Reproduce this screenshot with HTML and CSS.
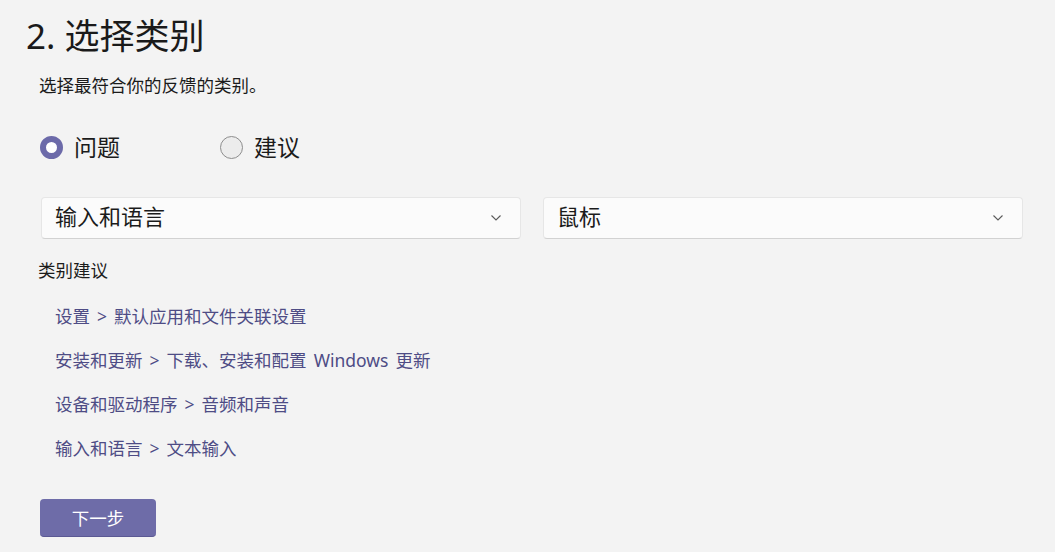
FILE: index.html
```html
<!DOCTYPE html>
<html lang="zh-CN">
<head>
<meta charset="utf-8">
<link rel="stylesheet" href="styles.css">
</head>
<body>
<div class="page">
  <h1 class="title">2. 选择类别</h1>
  <p class="subtitle">选择最符合你的反馈的类别。</p>
  <div class="radios">
    <div class="radio-item"><span class="radio checked"></span><span class="radio-label">问题</span></div>
    <div class="radio-item"><span class="radio"></span><span class="radio-label">建议</span></div>
  </div>
  <div class="selects">
    <div class="select"><span class="select-text">输入和语言</span><svg class="chev" width="12" height="8" viewBox="0 0 12 8"><path d="M1.5 1.5 L6 6 L10.5 1.5" fill="none" stroke="#5a5a5a" stroke-width="1.1"/></svg></div>
    <div class="select"><span class="select-text">鼠标</span><svg class="chev" width="12" height="8" viewBox="0 0 12 8"><path d="M1.5 1.5 L6 6 L10.5 1.5" fill="none" stroke="#5a5a5a" stroke-width="1.1"/></svg></div>
  </div>
  <div class="section-label">类别建议</div>
  <ul class="links">
    <li>设置 &gt; 默认应用和文件关联设置</li>
    <li>安装和更新 &gt; 下载、安装和配置 Windows 更新</li>
    <li>设备和驱动程序 &gt; 音频和声音</li>
    <li>输入和语言 &gt; 文本输入</li>
  </ul>
  <button class="next">下一步</button>
</div>
</body>
</html>
```
FILE: styles.css
```css
html, body {
  margin: 0;
  padding: 0;
  background: #f3f3f3;
}
body {
  font-family: "Noto Sans", "Noto Sans CJK SC", sans-serif;
  color: #1b1b1b;
  width: 1055px;
  height: 552px;
  overflow: hidden;
}
.page {
  padding: 16px 0 0 40px;
  display: flex;
  flex-direction: column;
  align-items: flex-start;
}
.title {
  margin: 0 0 0 -14px;
  font-size: 35px;
  font-weight: 400;
  line-height: 40px;
  color: #1a1a1a;
}
.subtitle {
  margin: 17px 0 0 -1px;
  font-size: 17.5px;
  line-height: 24px;
}
.radios {
  margin-top: 37px;
  display: grid;
  grid-template-columns: 180px 180px;
  height: 26px;
}
.radio-item {
  display: flex;
  align-items: center;
  gap: 11px;
}
.radio {
  width: 23px;
  height: 23px;
  border-radius: 50%;
  box-sizing: border-box;
  border: 1px solid #8d8d8d;
  background: #ececec;
}
.radio.checked {
  border: 6.5px solid #6c6aa9;
  background: #ffffff;
}
.radio-label {
  font-size: 23px;
  line-height: 26px;
}
.selects {
  margin-top: 37px;
  display: flex;
  gap: 22px;
  align-self: stretch;
  padding-right: 32px;
  margin-left: 1px;
}
.select {
  flex: 1;
  height: 42px;
  box-sizing: border-box;
  background: #fbfbfb;
  border: 1px solid #e6e6e6;
  border-bottom-color: #d2d2d2;
  border-radius: 4px;
  display: flex;
  align-items: center;
  justify-content: space-between;
  padding: 0 18px 4px 13px;
}
.select-text {
  font-size: 22px;
  line-height: 28px;
}
.chev {
  display: block;
  margin-top: 3px;
}
.section-label {
  margin-top: 19px;
  margin-left: -2px;
  font-size: 17.5px;
  line-height: 24px;
}
.links {
  list-style: none;
  margin: 22px 0 0 15px;
  padding: 0;
  display: flex;
  flex-direction: column;
  gap: 20px;
}
.links li {
  font-size: 17.5px;
  line-height: 24px;
  color: #4e4c85;
  word-spacing: 2.5px;
}
.next {
  margin-top: 39px;
  width: 116px;
  height: 38px;
  border: none;
  border-radius: 4px;
  background: #6e6ca8;
  border-bottom: 1px solid #5b5993;
  color: #ffffff;
  font-family: "Noto Sans CJK SC", "Noto Sans", sans-serif;
  font-size: 17.5px;
  padding: 0;
}
```
